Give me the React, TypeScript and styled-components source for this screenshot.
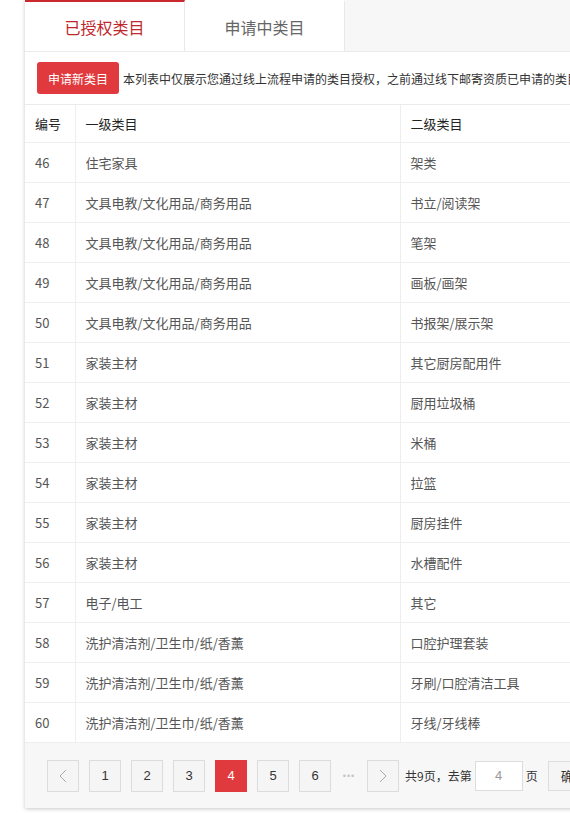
import React from "react";
import styled, { createGlobalStyle } from "styled-components";

const GlobalStyle = createGlobalStyle`
  html, body {
    margin: 0;
    padding: 0;
    background: #fff;
    overflow: hidden;
  }
  body {
    font-family: "Noto Sans CJK SC", "Noto Sans", sans-serif;
    color: #333;
  }
`;

const Page = styled.div`
  width: 570px;
  height: 815px;
  overflow: hidden;
  padding-left: 25px;
  box-sizing: border-box;
`;

const Panel = styled.div`
  width: 900px;
  background: #fff;
  box-shadow: 0 1px 4px rgba(0, 0, 0, 0.22);
`;

const TabBar = styled.div`
  display: flex;
  height: 51px;
  background: #f7f7f7;
  border-bottom: 1px solid #ebebeb;
`;

const Tab = styled.div<{ $active?: boolean }>`
  width: 160px;
  display: flex;
  align-items: center;
  justify-content: center;
  background: #fff;
  border-right: 1px solid #e8e8e8;
  border-top: 2px solid ${(p) => (p.$active ? "#c9282d" : "transparent")};
  box-sizing: border-box;
  font-size: 16px;
  color: ${(p) => (p.$active ? "#c0272d" : "#666")};
`;

const Toolbar = styled.div`
  display: flex;
  align-items: center;
  gap: 4px;
  height: 52px;
  padding-left: 12px;
  border-bottom: 1px solid #ebebeb;
`;

const RedButton = styled.button`
  width: 82px;
  height: 32px;
  border: none;
  border-radius: 3px;
  background: #e0393e;
  color: #fff;
  font-family: inherit;
  font-size: 12px;
  padding: 0;
`;

const Notice = styled.span`
  font-size: 12px;
  color: #333;
  white-space: nowrap;
`;

const Table = styled.table`
  width: 100%;
  border-collapse: collapse;
  table-layout: fixed;
`;

const Cell = styled.td<{ $head?: boolean }>`
  height: ${(p) => (p.$head ? 37 : 39)}px;
  padding: 0 10px;
  border-bottom: 1px solid #eee;
  border-right: 1px solid #eee;
  font-size: 13px;
  color: ${(p) => (p.$head ? "#222" : "#555")};
  font-weight: 400;
  text-align: left;
  white-space: nowrap;
`;

const Footer = styled.div`
  display: flex;
  align-items: center;
  gap: 10px;
  height: 65px;
  padding-left: 22px;
  background: #f7f7f7;
`;

const PageBtn = styled.div<{ $active?: boolean }>`
  width: 32px;
  height: 32px;
  box-sizing: border-box;
  display: flex;
  align-items: center;
  justify-content: center;
  border: 1px solid ${(p) => (p.$active ? "#e0393e" : "#dcdcdc")};
  background: ${(p) => (p.$active ? "#e0393e" : "#f5f5f5")};
  color: ${(p) => (p.$active ? "#fff" : "#333")};
  font-size: 13px;
  font-family: "Liberation Sans", sans-serif;
`;

const Ellipsis = styled.span`
  width: 16px;
  color: #c4c4c4;
  font-size: 9px;
  font-family: "Liberation Sans", sans-serif;
  letter-spacing: 1px;
  text-align: center;
  white-space: nowrap;
`;

const JumpGroup = styled.div`
  display: flex;
  align-items: center;
  gap: 3px;
  margin-left: -4px;
  font-size: 12px;
  color: #333;
  white-space: nowrap;
`;

const PageInput = styled.div`
  width: 48px;
  height: 30px;
  box-sizing: border-box;
  border: 1px solid #ddd;
  background: #fff;
  display: flex;
  align-items: center;
  justify-content: center;
  color: #999;
  font-size: 13px;
  font-family: "Liberation Sans", sans-serif;
`;

const GoButton = styled.div`
  margin-left: 7px;
  height: 30px;
  padding: 0 12px;
  box-sizing: border-box;
  border: 1px solid #ddd;
  background: #f5f5f5;
  display: flex;
  align-items: center;
  font-size: 13px;
`;

const Chevron = ({ dir }: { dir: "left" | "right" }) => (
  <svg width="8" height="14" viewBox="0 0 8 14" fill="none">
    <path
      d={dir === "left" ? "M7 1L1 7l6 6" : "M1 1l6 6-6 6"}
      stroke="#aaa"
      strokeWidth="1"
    />
  </svg>
);

const rows: [number, string, string][] = [
  [46, "住宅家具", "架类"],
  [47, "文具电教/文化用品/商务用品", "书立/阅读架"],
  [48, "文具电教/文化用品/商务用品", "笔架"],
  [49, "文具电教/文化用品/商务用品", "画板/画架"],
  [50, "文具电教/文化用品/商务用品", "书报架/展示架"],
  [51, "家装主材", "其它厨房配用件"],
  [52, "家装主材", "厨用垃圾桶"],
  [53, "家装主材", "米桶"],
  [54, "家装主材", "拉篮"],
  [55, "家装主材", "厨房挂件"],
  [56, "家装主材", "水槽配件"],
  [57, "电子/电工", "其它"],
  [58, "洗护清洁剂/卫生巾/纸/香薰", "口腔护理套装"],
  [59, "洗护清洁剂/卫生巾/纸/香薰", "牙刷/口腔清洁工具"],
  [60, "洗护清洁剂/卫生巾/纸/香薰", "牙线/牙线棒"],
];

export default function App() {
  return (
    <Page>
      <GlobalStyle />
      <Panel>
        <TabBar>
          <Tab $active>已授权类目</Tab>
          <Tab>申请中类目</Tab>
        </TabBar>
        <Toolbar>
          <RedButton>申请新类目</RedButton>
          <Notice>
            本列表中仅展示您通过线上流程申请的类目授权，之前通过线下邮寄资质已申请的类目授权请联系客服查询
          </Notice>
        </Toolbar>
        <Table>
          <colgroup>
            <col style={{ width: 50 }} />
            <col style={{ width: 325 }} />
            <col />
          </colgroup>
          <thead>
            <tr>
              <Cell as="th" $head>编号</Cell>
              <Cell as="th" $head>一级类目</Cell>
              <Cell as="th" $head>二级类目</Cell>
            </tr>
          </thead>
          <tbody>
            {rows.map(([id, first, second]) => (
              <tr key={id}>
                <Cell>{id}</Cell>
                <Cell>{first}</Cell>
                <Cell>{second}</Cell>
              </tr>
            ))}
          </tbody>
        </Table>
        <Footer>
          <PageBtn>
            <Chevron dir="left" />
          </PageBtn>
          {[1, 2, 3, 4, 5, 6].map((n) => (
            <PageBtn key={n} $active={n === 4}>
              {n}
            </PageBtn>
          ))}
          <Ellipsis>•••</Ellipsis>
          <PageBtn>
            <Chevron dir="right" />
          </PageBtn>
          <JumpGroup>
            共9页，去第
            <PageInput>4</PageInput>
            页
            <GoButton>确定</GoButton>
          </JumpGroup>
        </Footer>
      </Panel>
    </Page>
  );
}
